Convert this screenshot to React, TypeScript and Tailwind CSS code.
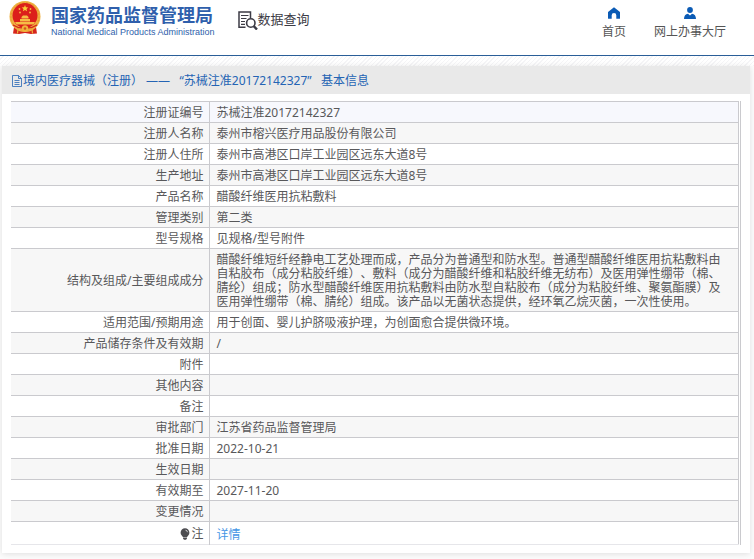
import type { ReactNode } from "react";

type Row = {
  label: ReactNode;
  value?: ReactNode;
};

const rows: Row[] = [
  { label: "注册证编号", value: "苏械注准20172142327" },
  { label: "注册人名称", value: "泰州市榕兴医疗用品股份有限公司" },
  { label: "注册人住所", value: "泰州市高港区口岸工业园区远东大道8号" },
  { label: "生产地址", value: "泰州市高港区口岸工业园区远东大道8号" },
  { label: "产品名称", value: "醋酸纤维医用抗粘敷料" },
  { label: "管理类别", value: "第二类" },
  { label: "型号规格", value: "见规格/型号附件" },
  {
    label: "结构及组成/主要组成成分",
    value:
      "醋酸纤维短纤经静电工艺处理而成，产品分为普通型和防水型。普通型醋酸纤维医用抗粘敷料由自粘胶布（成分粘胶纤维）、敷料（成分为醋酸纤维和粘胶纤维无纺布）及医用弹性绷带（棉、腈纶）组成；防水型醋酸纤维医用抗粘敷料由防水型自粘胶布（成分为粘胶纤维、聚氨酯膜）及医用弹性绷带（棉、腈纶）组成。该产品以无菌状态提供，经环氧乙烷灭菌，一次性使用。",
  },
  { label: "适用范围/预期用途", value: "用于创面、婴儿护脐吸液护理，为创面愈合提供微环境。" },
  { label: "产品储存条件及有效期", value: "/" },
  { label: "附件" },
  { label: "其他内容" },
  { label: "备注" },
  { label: "审批部门", value: "江苏省药品监督管理局" },
  { label: "批准日期", value: "2022-10-21" },
  { label: "生效日期" },
  { label: "有效期至", value: "2027-11-20" },
  { label: "变更情况" },
];

function Emblem() {
  return (
    <svg viewBox="0 0 32 34" className="h-[34px] w-8 shrink-0" aria-hidden="true">
      <path d="M5.500 24L4 33.500L10 34L16 33L22 34L28 33.500L26.500 24Z" fill="#d6261d" />
      <circle cx="16" cy="16.500" r="15.500" fill="#efb040" />
      <circle cx="16" cy="16.500" r="14" fill="none" stroke="#e2942f" strokeWidth=".8" strokeDasharray="2 1.500" />
      <circle cx="16" cy="15.500" r="12.500" fill="#dc1f1b" />
      <path d="M16 5l.9 2.200 2.400.2-1.800 1.500.6 2.300-2.100-1.200-2.100 1.200.6-2.300-1.800-1.500 2.400-.2z" fill="#f9cf3a" />
      <g fill="#f6bd45">
        <circle cx="10.500" cy="9" r=".9" />
        <circle cx="21.500" cy="9" r=".9" />
        <circle cx="11" cy="12.500" r=".9" />
        <circle cx="21" cy="12.500" r=".9" />
        <path d="M12.500 17l1.500-1.500h4l1.500 1.500v1.500h-7zM11 19h10v2.500h-10zM6 22h20l-1.500 2.500h-17z" />
      </g>
      <path d="M4 25c3 2 7 3 10 3M28 25c-3 2-7 3-10 3" fill="none" stroke="#d6261d" strokeWidth="1.500" />
      <path d="M9 29l-.5 4.500M23 29l.5 4.500" fill="none" stroke="#efb040" strokeWidth="1.200" />
      <circle cx="16" cy="28.500" r="3.200" fill="#f0b53a" />
      <circle cx="16" cy="28.500" r="1.300" fill="#d6541d" />
    </svg>
  );
}

function SearchDocIcon() {
  return (
    <svg viewBox="0 0 20 20" className="h-5 w-5 shrink-0" fill="none" stroke="#3c3b45" aria-hidden="true">
      <path d="M7.500 17.200H1V2h11.500v6" strokeWidth="1.500" />
      <path d="M3 5.500h7.500M3 8.500h5.500M3 11.500h4M3 14.300h4" strokeWidth="1.200" />
      <circle cx="12.800" cy="13" r="4.200" strokeWidth="1.600" />
      <path d="M15.800 16.200l3.200 3.300" strokeWidth="2.400" />
    </svg>
  );
}

function HomeIcon() {
  return (
    <svg viewBox="0 0 14 12" className="h-3 w-3.5" fill="#0b5bb5" aria-hidden="true">
      <path d="M7 .3L13 5v6.200a.6.600 0 0 1-.6.600H9.300V8.200a2.300 2.300 0 0 0-4.600 0v3.600H1.600a.6.600 0 0 1-.6-.6V5z" />
    </svg>
  );
}

function UserIcon() {
  return (
    <svg viewBox="0 0 14 12" className="h-3 w-3.5" fill="#0b5bb5" aria-hidden="true">
      <circle cx="7" cy="3" r="2.900" />
      <path d="M1 12c0-3.200 1.500-4.900 4-5.300L7 8.500l2-1.800c2.500.4 4 2.100 4 5.300z" />
    </svg>
  );
}

function FileIcon() {
  return (
    <svg viewBox="0 0 12 12" className="h-3 w-3 shrink-0" fill="none" stroke="#2464b4" aria-hidden="true">
      <path d="M1.500.5h6l3 3v8h-9zM7.500.5v3h3M3.500 5.500h5M3.500 7.500h5M3.500 9.500h5" strokeWidth=".8" />
    </svg>
  );
}

function BulbIcon() {
  return (
    <svg viewBox="0 0 10 12" className="h-3 w-2.5" aria-hidden="true">
      <path d="M5 .3a4.400 4.400 0 0 1 4.400 4.400C9.400 6.900 7.600 7.700 7.100 9H2.900C2.400 7.700.6 6.900.6 4.700A4.400 4.400 0 0 1 5 .3zM3 9.500h4v1L6 11.700H4l-1-1.200z" fill="#4c4c50" />
      <path d="M5.500 2.200a2.200 2.200 0 0 1 2 2" fill="none" stroke="#fff" strokeWidth=".7" />
    </svg>
  );
}

function DetailRow({ label, value }: Row) {
  return (
    <tr className="border-b border-[#cacace] bg-white first:bg-[#f7f8fd] even:bg-[#f7f7f7]">
      <th scope="row" className="h-[21px] border-r border-[#cacace] pb-0.5 pr-[5px] pt-1 text-right font-normal">
        {label}
      </th>
      <td className="pb-0.5 pl-[7px] pr-3 pt-1">{value}</td>
    </tr>
  );
}

export default function App() {
  return (
    <div className="min-h-screen bg-[#fcfcfc] pb-1.5 font-['Noto_Sans','Noto_Sans_CJK_SC',sans-serif] text-xs leading-[14px] text-[#58585a] [text-spacing-trim:space-all]">
      <header className="flex h-14 items-start justify-between border-b border-[#2a5e98] bg-white pl-[9px] pr-7">
        <div className="flex items-start">
          <Emblem />
          <a href="#" className="ml-2.5 mt-[5px] block whitespace-nowrap text-[#2f5fac]">
            <span className="block text-lg font-bold leading-5">国家药品监督管理局</span>
            <span className="block font-['Liberation_Sans',sans-serif] text-[9px] leading-[14px]">
              National Medical Products Administration
            </span>
          </a>
          <a href="#" className="ml-[23px] mt-2.5 flex whitespace-nowrap text-[13px] leading-[18px] text-[#3c3b45]">
            <SearchDocIcon />
            数据查询
          </a>
        </div>
        <nav className="mt-[7px] flex gap-7 whitespace-nowrap text-[#555]">
          <a href="#" className="flex flex-col items-center gap-1.5">
            <HomeIcon />
            首页
          </a>
          <a href="#" className="flex flex-col items-center gap-1.5">
            <UserIcon />
            网上办事大厅
          </a>
        </nav>
      </header>

      <div className="h-2.5 bg-[repeating-linear-gradient(135deg,#ffffff_0px,#ffffff_2px,#f5f5f7_2px,#f5f5f7_3px)]" />

      <main className="ml-0.5 mr-1 bg-white shadow-[0_1px_6px_rgba(0,0,0,0.12)]">
        <h1 className="flex h-7 items-center bg-[#e9e9e9] pl-[9px] pt-0.5 text-[#2464b4]">
          <FileIcon />
          <span>境内医疗器械（注册） ——&nbsp;&nbsp; “苏械注准20172142327” &nbsp;&nbsp;基本信息</span>
        </h1>
        <div className="px-[9px] pb-2 pt-[7px]">
          <div className="border-r border-[#cacace] pr-px">
            <table className="w-full table-fixed border-collapse border-r border-t border-[#cacace]">
              <colgroup>
                <col className="w-[198px]" />
                <col />
              </colgroup>
              <tbody>
                {rows.map((row, i) => (
                  <DetailRow key={i} {...row} />
                ))}
                <tr className="border-b border-[#e6e6ea] bg-white">
                  <th scope="row" className="h-[23px] border-r border-[#cacace] pr-[5px] pt-1 text-right font-normal">
                    <span className="inline-flex items-center">
                      <BulbIcon />
                      <span className="ml-px">注</span>
                    </span>
                  </th>
                  <td className="pl-[7px] pt-1">
                    <a href="#" className="text-[#4596e5]">详情</a>
                  </td>
                </tr>
              </tbody>
            </table>
          </div>
        </div>
      </main>
    </div>
  );
}
